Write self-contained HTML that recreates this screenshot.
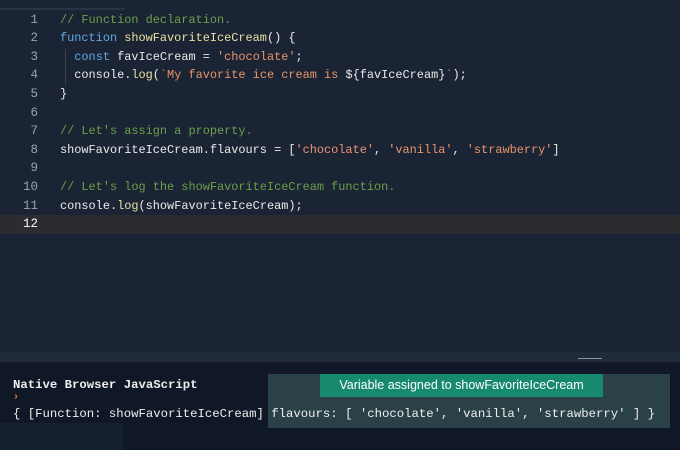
<!DOCTYPE html>
<html><head><style>
body{margin:0;width:680px;height:450px;overflow:hidden;background:#1b2434;font-family:"Liberation Mono",monospace;position:relative}
.ln{position:absolute;left:0;width:38px;text-align:right;color:#9aa2ad;font-size:12.5px}
.code{position:absolute;left:60px;font-size:11.9px;color:#eaeaea;white-space:pre}
.c{color:#6aa04a}.k{color:#5fa8e0}.s{color:#e8956b}.f{color:#e8e2a0}
</style></head><body>
<div style="position:absolute;left:0;top:8px;width:125px;height:2px;background:#2a3444"></div>
<div style="position:absolute;left:0;top:215px;width:680px;height:19px;background:#2b2c2f"></div>
<div style="position:absolute;left:65px;top:49px;width:1px;height:36px;background:#3b4452"></div>
<div id="lines"></div>
<div style="position:absolute;left:0;top:352px;width:680px;height:10px;background:#1f2a3b"></div>
<div style="position:absolute;left:578px;top:358px;width:24px;height:1px;background:#8a93a0"></div>
<div style="position:absolute;left:0;top:362px;width:680px;height:88px;background:#101827"></div>
<div style="position:absolute;left:0;top:423px;width:122px;height:27px;background:#152030"></div>
<div style="position:absolute;left:13px;top:378px;font-size:12.3px;color:#eee;font-weight:bold;white-space:pre">Native Browser JavaScript</div>
<div style="position:absolute;left:13px;top:392px;font-size:10px;color:#e8833a;font-weight:bold">›</div>
<div style="position:absolute;left:268px;top:374px;width:402px;height:54px;background:#2a4148"></div>
<div style="position:absolute;left:320px;top:374px;width:283px;height:23px;background:#178a6e;color:#fff;font-family:'Liberation Sans',sans-serif;font-size:12.5px;line-height:23px;text-align:center">Variable assigned to showFavoriteIceCream</div>
<div style="position:absolute;left:13px;top:407px;font-size:12.3px;color:#eee;white-space:pre">{ [Function: showFavoriteIceCream] flavours: [ 'chocolate', 'vanilla', 'strawberry' ] }</div>
<script>
var L=[
'<span class=c>// Function declaration.</span>',
'<span class=k>function</span> <span class=f>showFavoriteIceCream</span>() {',
'  <span class=k>const</span> favIceCream = <span class=s>\'chocolate\'</span>;',
'  console.<span class=f>log</span>(<span class=s>`My favorite ice cream is </span>${favIceCream}<span class=s>`</span>);',
'}','',
'<span class=c>// Let\'s assign a property.</span>',
'showFavoriteIceCream.flavours = [<span class=s>\'chocolate\'</span>, <span class=s>\'vanilla\'</span>, <span class=s>\'strawberry\'</span>]','',
'<span class=c>// Let\'s log the showFavoriteIceCream function.</span>',
'console.<span class=f>log</span>(showFavoriteIceCream);',''];
var h='';
for(var i=0;i<12;i++){var t=12.5+i*18.6;
h+='<div class=ln style="top:'+t+'px;'+(i==11?'color:#fff':'')+'">'+(i+1)+'</div><div class=code style="top:'+t+'px">'+L[i]+'</div>';}
document.getElementById('lines').innerHTML=h;
</script>
</body></html>
